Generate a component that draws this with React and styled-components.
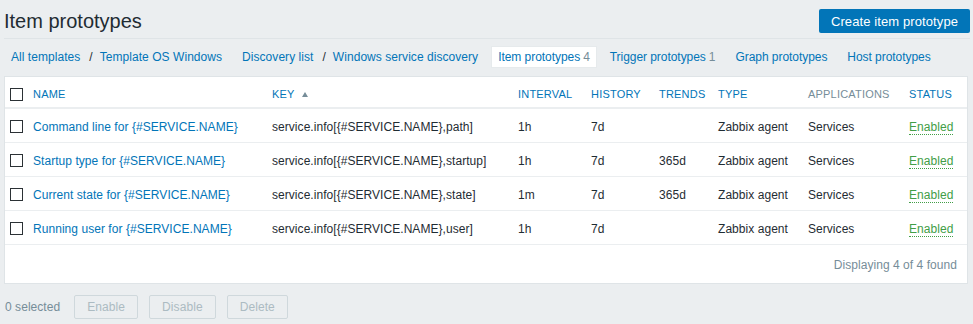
import React from 'react';
import styled, { createGlobalStyle } from 'styled-components';

const GlobalStyle = createGlobalStyle`
	body {
		margin: 0;
		background: #ebeef0;
		font-family: 'Liberation Sans', Arial, sans-serif;
		font-size: 12px;
		letter-spacing: 0.05px;
		color: #1f2c33;
	}
`;

const rows = [
	{ name: 'Command line for {#SERVICE.NAME}', key: 'service.info[{#SERVICE.NAME},path]', interval: '1h', history: '7d', trends: '' },
	{ name: 'Startup type for {#SERVICE.NAME}', key: 'service.info[{#SERVICE.NAME},startup]', interval: '1h', history: '7d', trends: '365d' },
	{ name: 'Current state for {#SERVICE.NAME}', key: 'service.info[{#SERVICE.NAME},state]', interval: '1m', history: '7d', trends: '365d' },
	{ name: 'Running user for {#SERVICE.NAME}', key: 'service.info[{#SERVICE.NAME},user]', interval: '1h', history: '7d', trends: '' },
];

const colWidths = [23, 239, 246, 73, 68, 59, 90, 101, 63];

export default class App extends React.Component {
	render() {
		return (
			<React.Fragment>
				<GlobalStyle />
				<Page>
					<Header>
						<Title>Item prototypes</Title>
						<PrimaryButton>Create item prototype</PrimaryButton>
					</Header>
					<Nav>
						<NavItem crumb>
							<Link>All templates</Link>
							<Sep>/</Sep>
							<Link>Template OS Windows</Link>
						</NavItem>
						<NavItem crumb>
							<Link>Discovery list</Link>
							<Sep>/</Sep>
							<Link>Windows service discovery</Link>
						</NavItem>
						<NavItem active>
							<Link>Item prototypes</Link>
							<Count>4</Count>
						</NavItem>
						<NavItem>
							<Link>Trigger prototypes</Link>
							<Count>1</Count>
						</NavItem>
						<NavItem>
							<Link>Graph prototypes</Link>
						</NavItem>
						<NavItem>
							<Link>Host prototypes</Link>
						</NavItem>
					</Nav>
					<Panel>
						<Table>
							<colgroup>
								{colWidths.map((w, i) => (
									<col key={i} style={{ width: w }} />
								))}
							</colgroup>
							<thead>
								<tr>
									<Th><Checkbox /></Th>
									<Th>Name</Th>
									<Th>Key<SortArrow /></Th>
									<Th>Interval</Th>
									<Th>History</Th>
									<Th>Trends</Th>
									<Th>Type</Th>
									<Th muted>Applications</Th>
									<Th>Status</Th>
								</tr>
							</thead>
							<tbody>
								{rows.map((r) => (
									<tr key={r.key}>
										<Td><Checkbox /></Td>
										<Td><Link>{r.name}</Link></Td>
										<Td>{r.key}</Td>
										<Td>{r.interval}</Td>
										<Td>{r.history}</Td>
										<Td>{r.trends}</Td>
										<Td>Zabbix agent</Td>
										<Td>Services</Td>
										<Td><Status>Enabled</Status></Td>
									</tr>
								))}
							</tbody>
						</Table>
						<Footer>Displaying 4 of 4 found</Footer>
					</Panel>
					<Actions>
						<Selected>0 selected</Selected>
						<GhostButton>Enable</GhostButton>
						<GhostButton>Disable</GhostButton>
						<GhostButton>Delete</GhostButton>
					</Actions>
				</Page>
			</React.Fragment>
		);
	}
}

const Page = styled.div`
	padding: 0 3px 0 4px;
`;

const Header = styled.div`
	display: flex;
	justify-content: space-between;
	align-items: flex-start;
	height: 39px;
	padding-top: 9px;
	box-sizing: border-box;
	border-bottom: 1px solid #dfe4e7;
`;

const Title = styled.h1`
	margin: 0;
	font-size: 20px;
	line-height: 24px;
	font-weight: normal;
	letter-spacing: 0;
	color: #1f2c33;
`;

const PrimaryButton = styled.button`
	height: 24px;
	width: 151px;
	padding: 0;
	border: none;
	border-radius: 2px;
	background: #0275b8;
	color: #fff;
	font-family: inherit;
	font-size: 13px;
	letter-spacing: 0.1px;
`;

const Nav = styled.div`
	display: flex;
	gap: 8px;
	margin: 8px 0 9px 1px;
	height: 20px;
`;

const NavItem = styled.div`
	display: flex;
	align-items: center;
	padding: 0 6px;
	height: 20px;
	line-height: 20px;
	white-space: pre;
	letter-spacing: ${(p) => (p.crumb ? '0.05px' : '-0.05px')};
	background: ${(p) => (p.active ? '#fff' : 'transparent')};
	box-shadow: ${(p) => (p.active ? '0 0 0 1px #e6eaec' : 'none')};
`;

const Link = styled.span`
	color: #0275b8;
`;

const Sep = styled.span`
	color: #1f2c33;
	padding: 0 7px 0 9px;
`;

const Count = styled.span`
	color: #768d99;
	margin-left: 3px;
`;

const Panel = styled.div`
	background: #fff;
	border: 1px solid #dfe4e7;
	margin-right: 2px;
`;

const Table = styled.table`
	width: 100%;
	table-layout: fixed;
	border-collapse: separate;
	border-spacing: 0;
`;

const Th = styled.th`
	padding: 10px 5px 6px;
	line-height: 14px;
	text-align: left;
	font-weight: normal;
	font-size: 11px;
	text-transform: uppercase;
	letter-spacing: 0.2px;
	color: ${(p) => (p.muted ? '#768d99' : '#0275b8')};
	border-bottom: 2px solid #ebeef0;
	white-space: nowrap;
`;

const Td = styled.td`
	padding: 11px 5px 8px;
	line-height: 14px;
	border-bottom: 1px solid #ebeef0;
	white-space: nowrap;
`;

const Checkbox = styled.span`
	display: inline-block;
	width: 11px;
	height: 11px;
	border: 1px solid #2b3135;
	vertical-align: middle;
	margin-top: -2px;
`;

const SortArrow = styled.span`
	display: inline-block;
	margin-left: 7px;
	width: 0;
	height: 0;
	border-left: 3.5px solid transparent;
	border-right: 3.5px solid transparent;
	border-bottom: 5px solid #768d99;
	vertical-align: 1px;
`;

const Status = styled.span`
	color: #429e47;
	border-bottom: 1px dotted #429e47;
`;

const Footer = styled.div`
	height: 38px;
	line-height: 40px;
	text-align: right;
	padding-right: 10px;
	color: #768d99;
`;

const Actions = styled.div`
	display: flex;
	align-items: center;
	gap: 11px;
	margin-top: 11px;
`;

const Selected = styled.span`
	color: #768d99;
	margin: 0 3px 0 1px;
`;

const GhostButton = styled.button`
	height: 24px;
	padding: 0 12px;
	background: transparent;
	border: 1px solid #cfd8dc;
	border-radius: 2px;
	color: #acbbc2;
	font-family: inherit;
	font-size: 12px;
	letter-spacing: 0.08px;
`;
